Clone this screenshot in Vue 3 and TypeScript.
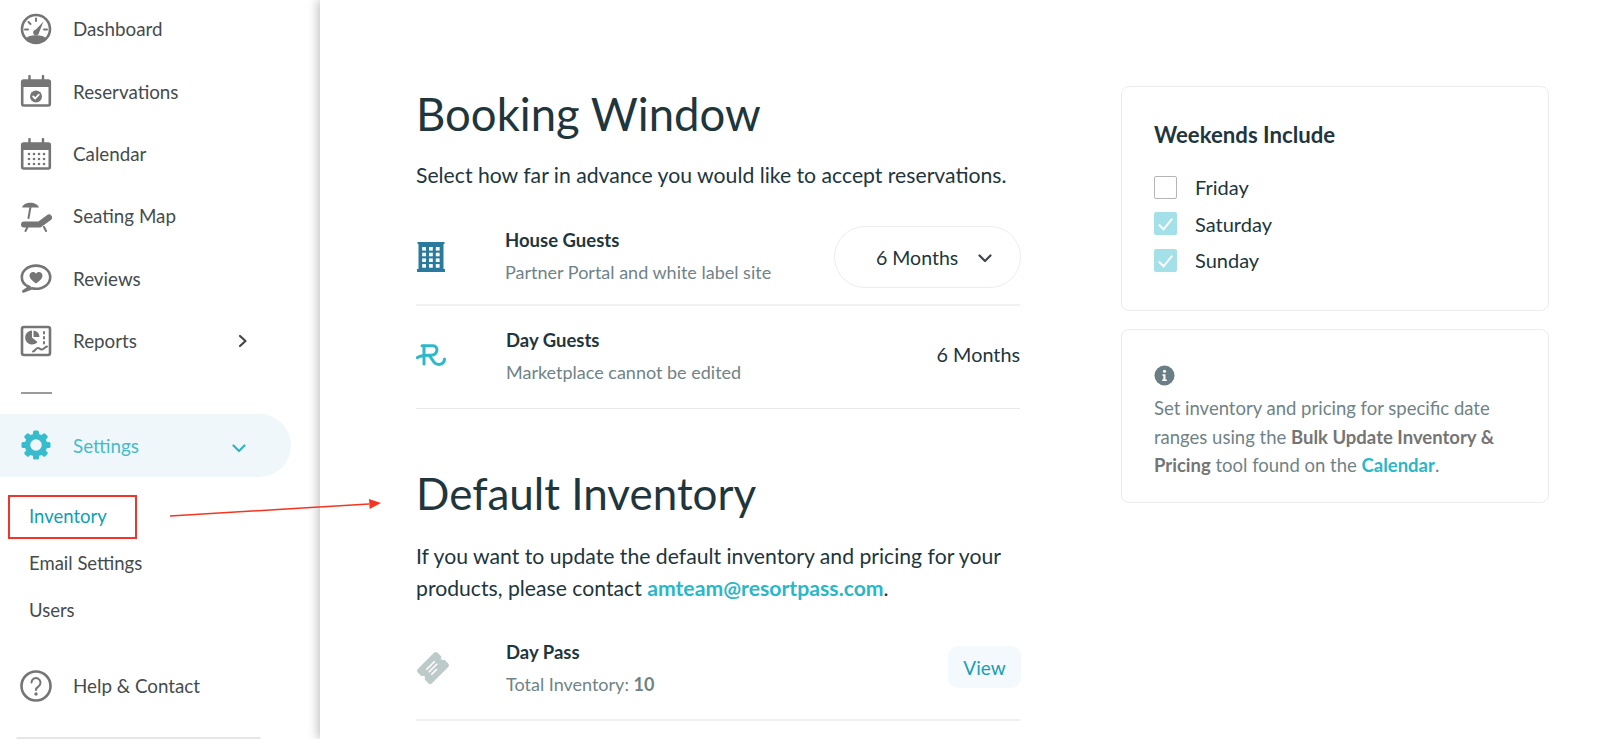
<script setup lang="ts">
type NavItem = {
  id: string;
  label: string;
  arrow?: boolean;
};

const navItems: NavItem[] = [
  { id: "dashboard", label: "Dashboard" },
  { id: "reservations", label: "Reservations" },
  { id: "calendar", label: "Calendar" },
  { id: "seating", label: "Seating Map" },
  { id: "reviews", label: "Reviews" },
  { id: "reports", label: "Reports", arrow: true }
];

const subItems = ["Inventory", "Email Settings", "Users"];

const weekendDays = [
  { label: "Friday", checked: false },
  { label: "Saturday", checked: true },
  { label: "Sunday", checked: true }
];

const calendarDots: [number, number][] = [];
for (const y of [16, 21, 26]) {
  for (const x of [9, 14, 19, 24]) {
    calendarDots.push([x, y]);
  }
}

const gearTeeth = [0, 45, 90, 135, 180, 225, 270, 315];
</script>

<template>
  <div class="page">
    <aside class="sidebar">
      <nav class="nav">
        <a v-for="item in navItems" :key="item.id" class="nav-item">
          <svg class="nav-icon" viewBox="0 0 32 32" aria-hidden="true">
            <template v-if="item.id === 'dashboard'">
              <circle cx="16" cy="16" r="14" class="line" />
              <path d="M5.5 25.5C9 21 23 21 26.5 25.5A14.5 14.5 0 0 1 5.5 25.5Z" class="solid" />
              <path d="M14 18.500 23.500 8.500 18.500 21Z" class="solid" />
              <circle cx="16" cy="19.500" r="2.800" class="solid" />
              <path d="M16 5.500v2.500M8.500 9l2 2M5 16.500h3M24 16.500h3" class="thin" />
            </template>
            <template v-else-if="item.id === 'reservations' || item.id === 'calendar'">
              <rect x="2.200" y="5.500" width="27.600" height="25" rx="1.500" class="line" />
              <rect x="2" y="5" width="28" height="7" class="solid" />
              <path d="M9.500 1v7M23 1v7" class="peg" />
              <template v-if="item.id === 'reservations'">
                <circle cx="16" cy="21.500" r="6" class="solid" />
                <path d="M13.200 21.500l2 2 3.600-3.800" class="tick" />
              </template>
              <template v-else>
                <circle v-for="dot in calendarDots" :key="dot.join()" :cx="dot[0]" :cy="dot[1]" r="1.300" class="solid" />
              </template>
            </template>
            <template v-else-if="item.id === 'seating'">
              <path d="M2 7.500C3.500 1 17 1 19 7.500Z" class="solid" />
              <path d="M10.800 5 8.500 18" class="thin" />
              <path d="M4 24.500H19.500L29 17.500" class="lounger" />
              <path d="M7.500 27 5.500 31M24 27l2 4" class="thin" />
            </template>
            <template v-else-if="item.id === 'reviews'">
              <path d="M9 24.800C4.500 23 1.800 19.500 1.800 15.200 1.800 8.800 8 3.600 16 3.600s14.200 5.200 14.200 11.600S24 26.800 16 26.800c-1.500 0-3-.2-4.300-.5L2.500 29.800C5 28 7.500 26.500 9 24.800Z" class="line" />
              <path d="M16 21.500C12 18.500 9.500 16.500 9.500 13.700 9.500 11.500 11.200 10 13 10c1.300 0 2.400.6 3 1.800.6-1.200 1.700-1.800 3-1.800 1.800 0 3.500 1.500 3.500 3.700 0 2.800-2.500 4.800-6.500 7.800Z" class="solid" />
            </template>
            <template v-else>
              <rect x="2" y="2" width="28" height="28" rx="2" class="line" />
              <path d="M12 5.500A7 7 0 1 0 17.500 17L12 12.500Z" class="solid" />
              <path d="M13.500 5.500A7 7 0 0 1 19.500 12H13.500Z" class="solid" />
              <path d="M24 7v1.500M24 12v1.500M24 17v1.500" class="thin" />
              <path d="M13 26.500c2-.5 3-3.500 5-3.500s2 2 4 1.500 3-2.500 5-3" class="thin" />
            </template>
          </svg>
          <span class="nav-label">{{ item.label }}</span>
          <svg v-if="item.arrow" class="nav-arrow" viewBox="0 0 12 14" aria-hidden="true">
            <path d="M3 2l5.500 5L3 12" />
          </svg>
        </a>
      </nav>

      <div class="nav-divider"></div>

      <a class="nav-item nav-item--active">
        <svg class="nav-icon" viewBox="0 0 32 32" aria-hidden="true">
          <circle cx="16" cy="16" r="8.500" class="gear-ring" />
          <rect
            v-for="angle in gearTeeth"
            :key="angle"
            x="13"
            y="1.500"
            width="6"
            height="7"
            rx="1.500"
            class="gear-tooth"
            :transform="`rotate(${angle} 16 16)`"
          />
        </svg>
        <span class="nav-label">Settings</span>
        <svg class="nav-chevron" viewBox="0 0 14 9" aria-hidden="true">
          <path d="M1.500 1.500 7 7l5.500-5.500" />
        </svg>
      </a>

      <ul class="sub-nav">
        <li v-for="(sub, index) in subItems" :key="sub" :class="{ 'sub-nav__current': index === 0 }">{{ sub }}</li>
      </ul>

      <a class="nav-item nav-item--help">
        <svg class="nav-icon" viewBox="0 0 32 32" aria-hidden="true">
          <circle cx="16" cy="16" r="14.500" class="line" />
          <path d="M11.500 12.500a4.500 4.500 0 1 1 7 3.800c-1.700 1.100-2.500 1.900-2.500 3.700" class="thin" />
          <circle cx="16" cy="24" r="1.700" class="solid" />
        </svg>
        <span class="nav-label">Help &amp; Contact</span>
      </a>
      <div class="sidebar-foot"></div>
    </aside>

    <main class="main">
      <section class="content">
        <h1>Booking Window</h1>
        <p class="lead">Select how far in advance you would like to accept reservations.</p>

        <div class="row row--house">
          <svg class="row-icon" viewBox="0 0 30 30" aria-hidden="true">
            <path d="M1.500 0h27v2h-1v25h1.500v3H1v-3h1.500V2h-1Z" class="building" />
            <g class="windows">
              <rect
                v-for="n in 12"
                :key="n"
                :x="6.200 + ((n - 1) % 3) * 6.800"
                :y="5 + Math.floor((n - 1) / 3) * 5.700"
                width="3.800"
                height="3.600"
              />
            </g>
          </svg>
          <div class="row-copy">
            <strong>House Guests</strong>
            <small>Partner Portal and white label site</small>
          </div>
          <div class="select">
            <span>6 Months</span>
            <svg viewBox="0 0 14 9" aria-hidden="true"><path d="M1.500 1.500 7 7l5.500-5.500" /></svg>
          </div>
        </div>

        <div class="row row--day">
          <svg class="row-icon" viewBox="0 0 30 30" aria-hidden="true">
            <path d="M6 3.700H17C22.500 3.700 22.500 12.800 15 13.200 9 13.500 5.500 13 1.300 15.700" class="logo" />
            <path d="M8 4V22" class="logo" />
            <path d="M13 13.500C16 15.500 16.500 20 19.500 21.500 23.500 23.500 28.500 22 28.500 17" class="logo" />
          </svg>
          <div class="row-copy">
            <strong>Day Guests</strong>
            <small>Marketplace cannot be edited</small>
          </div>
          <span class="row-value">6 Months</span>
        </div>

        <h1 class="second">Default Inventory</h1>
        <p class="lead lead--two">
          If you want to update the default inventory and pricing for your products, please contact
          <a class="mail">amteam@resortpass.com</a>.
        </p>

        <div class="row row--pass">
          <svg class="row-icon" viewBox="0 0 34 34" aria-hidden="true">
            <g transform="rotate(-45 17 17)">
              <rect x="3" y="7" width="28" height="20" rx="2.500" class="ticket" />
              <circle cx="3" cy="17" r="2" fill="#fff" />
              <circle cx="31" cy="17" r="2" fill="#fff" />
              <path d="M11 13.500h12M11 17h12M11 20.500h8" class="ticket-lines" />
            </g>
          </svg>
          <div class="row-copy">
            <strong>Day Pass</strong>
            <small>Total Inventory: <b>10</b></small>
          </div>
          <button type="button" class="view-btn">View</button>
        </div>
      </section>

      <aside class="side">
        <div class="card card--weekends">
          <h2>Weekends Include</h2>
          <label v-for="day in weekendDays" :key="day.label" class="check">
            <span class="box" :class="{ 'box--on': day.checked }">
              <svg v-if="day.checked" viewBox="0 0 24 24" aria-hidden="true"><path d="M5 13l5 5 9-11" /></svg>
            </span>
            {{ day.label }}
          </label>
        </div>
        <div class="card card--info">
          <svg class="info-icon" viewBox="0 0 22 22" aria-hidden="true">
            <circle cx="11" cy="11" r="10.500" />
            <circle cx="11" cy="6.500" r="1.600" class="info-mark" />
            <path d="M8.800 9.800h3.200v5.400h1.500v1.500H8.500v-1.500h1.300v-3.900H8.800Z" class="info-mark" />
          </svg>
          <p>
            Set inventory and pricing for specific date ranges using the
            <b>Bulk Update Inventory &amp; Pricing</b> tool found on the <a>Calendar</a>.
          </p>
        </div>
      </aside>
    </main>

    <div class="annotation-box"></div>
    <svg class="annotation-arrow" viewBox="0 0 212 20" aria-hidden="true">
      <path d="M1 18 200 6" />
      <path d="M212 5 200 1l.6 10Z" class="annotation-head" />
    </svg>
  </div>
</template>

<style>
html,
body {
  margin: 0;
  background: #fff;
  overflow: hidden;
}
</style>

<style scoped>
.page {
  position: relative;
  display: flex;
  width: 1600px;
  height: 739px;
  overflow: hidden;
  font-family: Lato, "Noto Sans", sans-serif;
  color: #1f363c;
  background: #fff;
}

.sidebar {
  position: relative;
  flex: 0 0 320px;
  display: flex;
  flex-direction: column;
}

.nav {
  display: flex;
  flex-direction: column;
}

.nav-item {
  display: flex;
  align-items: center;
  height: 62.400px;
  padding-left: 20px;
  color: #454b4d;
  font-size: 18.800px;
  box-sizing: border-box;
}

.nav > .nav-item:first-child {
  height: 60px;
  padding-bottom: 3px;
}

.nav-icon {
  flex: 0 0 32px;
  width: 32px;
  height: 32px;
  margin-right: 21px;
}

.nav-arrow {
  width: 12px;
  height: 14px;
  margin-left: auto;
  margin-right: 71px;
}

.nav-arrow path,
.nav-chevron path,
.select path {
  fill: none;
  stroke: #3f4548;
  stroke-width: 2.200;
  stroke-linecap: round;
  stroke-linejoin: round;
}

.line {
  fill: none;
  stroke: #757575;
  stroke-width: 2.600;
}

.solid {
  fill: #757575;
}

.thin {
  fill: none;
  stroke: #757575;
  stroke-width: 2;
  stroke-linecap: round;
}

.peg {
  fill: none;
  stroke: #757575;
  stroke-width: 2.400;
  stroke-linecap: round;
}

.tick {
  fill: none;
  stroke: #fff;
  stroke-width: 1.800;
  stroke-linecap: round;
  stroke-linejoin: round;
}

.lounger {
  fill: none;
  stroke: #757575;
  stroke-width: 6;
  stroke-linecap: round;
  stroke-linejoin: round;
}

.nav-divider {
  width: 31px;
  height: 2px;
  margin: 20px 0 0 21px;
  background: #9b9b9b;
}

.nav-item--active {
  width: 291px;
  height: 63px;
  margin-top: 20px;
  border-radius: 0 32px 32px 0;
  background: #eff7fa;
  color: #44bccb;
}

.gear-ring {
  fill: none;
  stroke: #38bccd;
  stroke-width: 5.500;
}

.gear-tooth {
  fill: #38bccd;
}

.nav-chevron {
  width: 14px;
  height: 9px;
  margin: 6px 0 0 auto;
  margin-right: 45px;
}

.nav-chevron path {
  stroke: #2fb4c6;
}

.sub-nav {
  list-style: none;
  margin: 16px 0 0;
  padding: 0 0 0 29px;
  color: #454b4d;
  font-size: 18.500px;
}

.sub-nav li {
  display: flex;
  align-items: center;
  height: 47px;
}

.sub-nav__current {
  color: #0e9fb3;
}

.nav-item--help {
  margin-top: 20.500px;
}

.sidebar-foot {
  position: absolute;
  left: 16px;
  bottom: 0;
  width: 245px;
  height: 2px;
  border-radius: 2px 2px 0 0;
  background: #e6e6e6;
}

.main {
  position: relative;
  flex: 1;
  display: flex;
  align-items: flex-start;
  gap: 101px;
  padding-left: 96px;
  background: #fff;
  box-shadow: -3px 0 9px rgba(0, 0, 0, 0.22);
}

.content {
  flex: 0 0 604px;
}

h1 {
  margin: 0;
  padding-top: 86px;
  font-size: 45.500px;
  font-weight: 400;
  line-height: 56px;
  color: #1f363c;
}

h1.second {
  padding-top: 56px;
  font-size: 44px;
}

.lead {
  margin: 17px 0 0;
  font-size: 21.200px;
  line-height: 32px;
  color: #20363c;
}

.lead--two {
  margin-top: 19px;
  width: 600px;
}

.mail {
  color: #2ab7c8;
  font-weight: 700;
}

.row {
  display: flex;
  align-items: center;
  border-bottom: 2px solid #f0f1f1;
}

.row--house {
  height: 94px;
  margin-top: 19px;
}

.row--day {
  height: 102px;
  border-bottom-width: 1px;
  border-bottom-color: #e8eaea;
}

.row--pass {
  height: 102px;
  margin-top: 13px;
}

.row-icon {
  flex: 0 0 30px;
  width: 30px;
  height: 30px;
  margin-right: 60px;
}

.row--house .row-icon {
  margin-right: 59px;
}

.row--pass .row-icon {
  width: 34px;
  height: 34px;
  flex-basis: 34px;
  margin-right: 56px;
}

.building {
  fill: #2a7a9e;
}

.windows rect {
  fill: #fff;
}

.logo {
  fill: none;
  stroke: #2fb8c9;
  stroke-width: 3;
  stroke-linecap: round;
  stroke-linejoin: round;
}

.ticket {
  fill: #bccac9;
}

.ticket-lines {
  fill: none;
  stroke: #fff;
  stroke-width: 1.600;
}

.row-copy {
  display: flex;
  flex-direction: column;
  gap: 10px;
}

.row--house .row-copy {
  margin-top: -2px;
}

.row--day .row-copy {
  margin-top: -2px;
}

.row-copy strong {
  font-size: 18.500px;
  line-height: 22px;
  font-weight: 700;
  color: #1f363c;
}

.row-copy small {
  font-size: 18px;
  line-height: 22px;
  color: #6f8387;
}

.row-copy b {
  font-weight: 700;
}

.select {
  display: flex;
  align-items: center;
  justify-content: space-between;
  box-sizing: border-box;
  width: 187px;
  height: 62px;
  margin: 0 -1px 0 auto;
  padding: 0 28px 0 41px;
  border: 1px solid #eceeee;
  border-radius: 31px;
  font-size: 19.500px;
  color: #20363c;
}

.select svg {
  width: 14px;
  height: 9px;
  margin-top: 2px;
}

.row-value {
  margin: -7px 0 0 auto;
  font-size: 19.800px;
  color: #20363c;
}

.view-btn {
  width: 73px;
  height: 42px;
  margin: -2px -1px 0 auto;
  border: 0;
  border-radius: 10px;
  background: #f3f9fc;
  color: #1a9db5;
  font: inherit;
  font-size: 19px;
}

.side {
  flex: 0 0 428px;
  display: flex;
  flex-direction: column;
  gap: 18px;
  margin-top: 86px;
}

.card {
  box-sizing: border-box;
  border: 1px solid #ebeded;
  border-radius: 8px;
  padding-left: 32px;
}

.card--weekends {
  height: 225px;
  padding-top: 35px;
}

h2 {
  margin: 0 0 21px;
  font-size: 22.200px;
  line-height: 26px;
  font-weight: 700;
  color: #1f363c;
}

.check {
  display: flex;
  align-items: center;
  gap: 18px;
  height: 36.500px;
  font-size: 20px;
  color: #20363c;
}

.box {
  box-sizing: border-box;
  width: 23px;
  height: 23px;
  border: 1px solid #b5b5b5;
  border-radius: 2px;
}

.box--on {
  border: 0;
  background: #a3e0e8;
}

.box svg {
  display: block;
  width: 23px;
  height: 23px;
}

.box path {
  fill: none;
  stroke: #fff;
  stroke-width: 2;
}

.card--info {
  height: 174px;
  padding: 35px 40px 0 32px;
}

.info-icon {
  display: block;
  width: 21px;
  height: 21px;
  fill: #6a7f85;
}

.info-mark {
  fill: #fff;
}

.card--info p {
  margin: 8px 0 0;
  font-size: 18.500px;
  line-height: 28.500px;
  color: #6f8387;
}

.card--info b {
  color: #757575;
  font-weight: 700;
}

.card--info a {
  color: #2ab7c8;
  font-weight: 700;
}

.annotation-box {
  position: absolute;
  left: 8px;
  top: 495px;
  width: 129px;
  height: 44px;
  box-sizing: border-box;
  border: 2px solid #f0352a;
}

.annotation-arrow {
  position: absolute;
  left: 169px;
  top: 498px;
  width: 212px;
  height: 20px;
}

.annotation-arrow path {
  fill: none;
  stroke: #f4351f;
  stroke-width: 1.500;
}

.annotation-arrow .annotation-head {
  fill: #f4351f;
  stroke: none;
}
</style>
